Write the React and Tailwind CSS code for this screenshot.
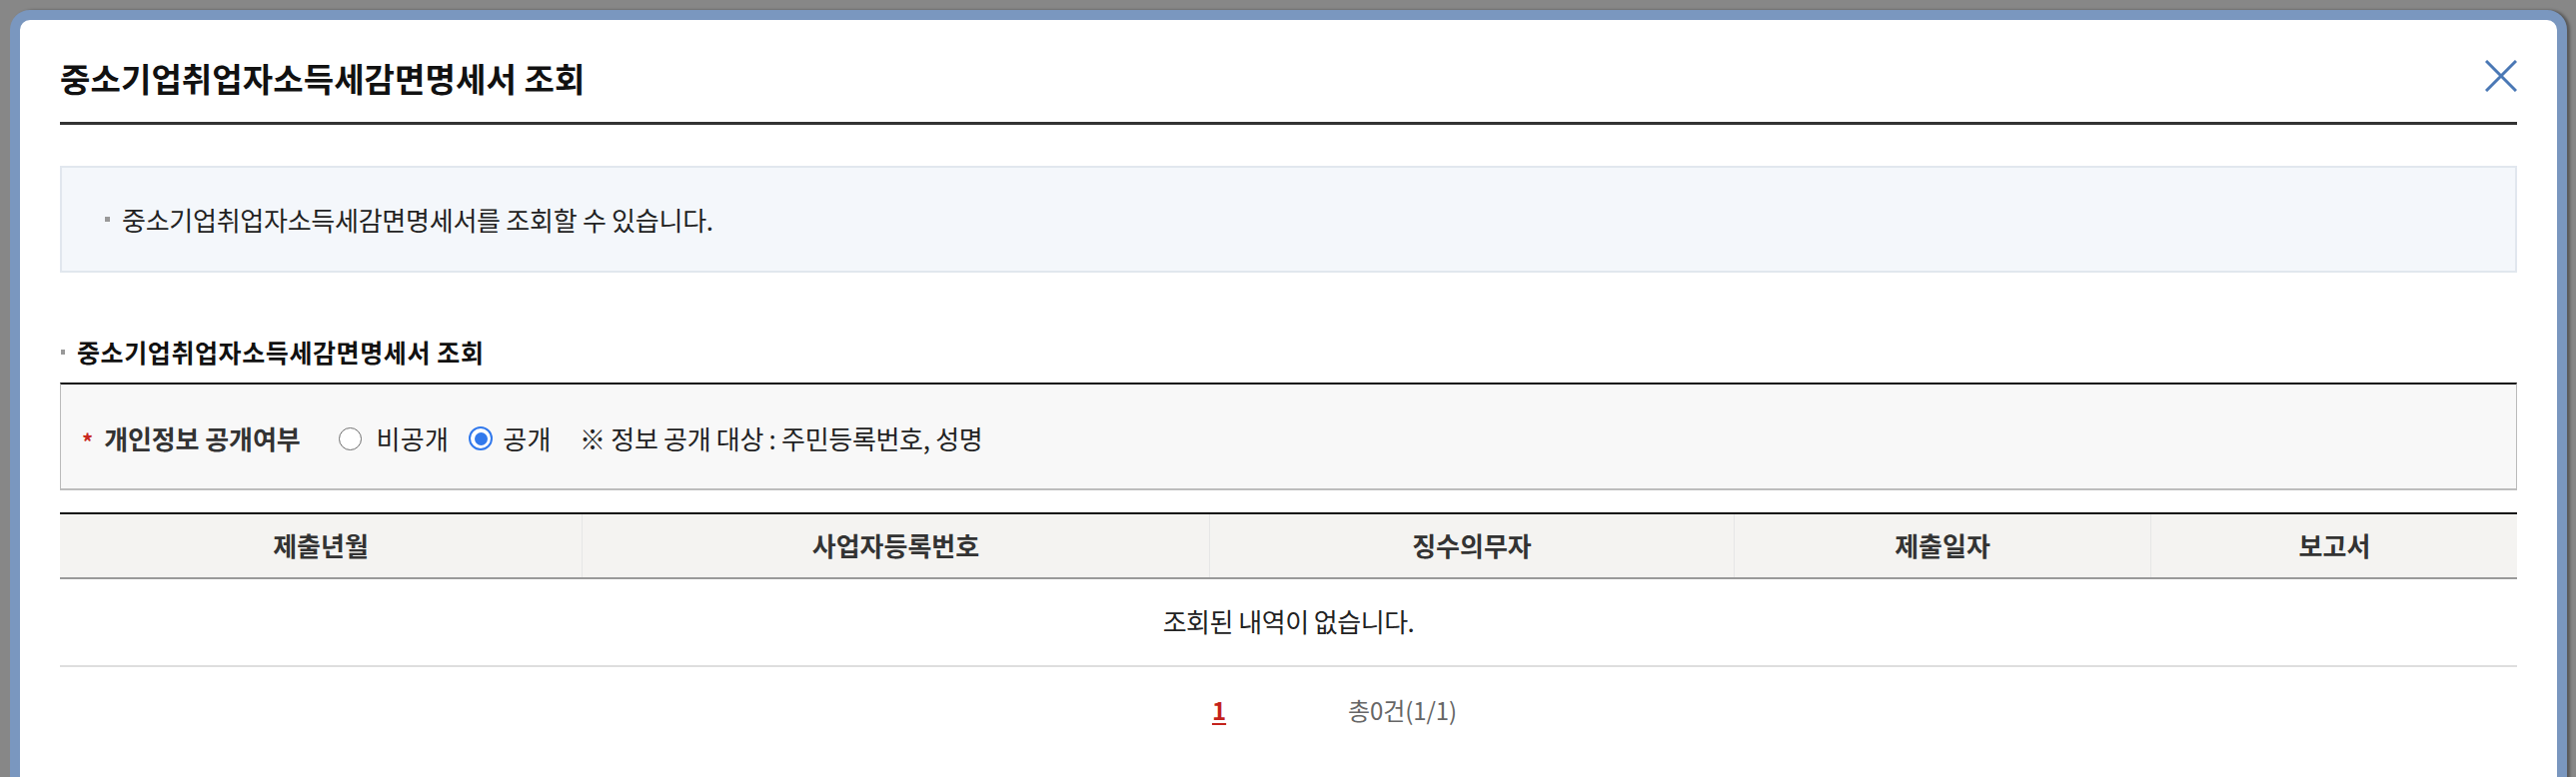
export default function App() {
  const cols = ["제출년월", "사업자등록번호", "징수의무자", "제출일자", "보고서"];
  return (
    <div className="h-[778px] w-full overflow-hidden bg-[#878787] pt-[10px] pl-[10px] font-['Noto_Sans_CJK_KR','Noto_Sans',sans-serif]">
      <div className="w-[2559px] h-[800px] rounded-[20px] border-[10px] border-[#7a97bf] bg-white shadow-[3px_0_3px_rgba(0,0,0,0.35)]">
        <div className="px-[40px]">
          {/* Header */}
          <div className="h-[105px] pt-[37px] flex items-start justify-between border-b-[3px] border-[#333]">
            <h1 className="text-[33px] leading-[42px] font-bold tracking-[0.1px] text-[#111]">
              중소기업취업자소득세감면명세서 조회
            </h1>
            <button className="mt-[3px] w-[32px] h-[32px] text-[#4a78b5]" aria-label="닫기">
              <svg viewBox="0 0 32 32" width="32" height="32" fill="none" stroke="currentColor" strokeWidth="3" strokeLinecap="butt">
                <path d="M1 1 L31 31 M31 1 L1 31" />
              </svg>
            </button>
          </div>

          {/* Info box */}
          <div className="mt-[41px] h-[107px] border-2 border-[#e1e7ee] bg-[#f4f7fb] flex items-center pl-[43px]">
            <span className="w-[5px] h-[5px] bg-[#999] mr-[12px]" />
            <p className="text-[26px] leading-[30px] tracking-[-0.25px] text-[#222]">
              중소기업취업자소득세감면명세서를 조회할 수 있습니다.
            </p>
          </div>

          {/* Section heading */}
          <div className="mt-[61px] h-[36px] flex items-center">
            <span className="ml-[1px] w-[4px] h-[5px] bg-[#999] mr-[12px]" />
            <h2 className="text-[25px] leading-[36px] font-bold tracking-[0.6px] text-[#111]">
              중소기업취업자소득세감면명세서 조회
            </h2>
          </div>

          {/* Form box */}
          <div className="mt-[13px] h-[108px] border-t-2 border-t-[#111] border-x border-x-[#bbb] border-b-2 border-b-[#bdbdbd] bg-[#f8f8f8] flex items-center pl-[21px] pt-[4px] text-[26px] leading-[30px]">
            <span className="text-[#c8281e] font-bold text-[22px] mr-[11px] mt-[4px]">*</span>
            <span className="font-bold text-[#333] tracking-[-0.1px]">개인정보 공개여부</span>
            <label className="ml-[38px] flex items-center">
              <span className="w-[23px] h-[23px] rounded-full border-[1.5px] border-[#6f6f6f] bg-white" />
              <span className="ml-[15px] text-[#222] tracking-[0.3px]">비공개</span>
            </label>
            <label className="ml-[20px] flex items-center">
              <span className="w-[24px] h-[24px] rounded-full border-[2.5px] border-[#3279ec] bg-white flex items-center justify-center">
                <span className="w-[13px] h-[13px] rounded-full bg-[#3279ec]" />
              </span>
              <span className="ml-[10px] text-[#222] tracking-[0.5px]">공개</span>
            </label>
            <span className="ml-[28px] text-[#222] tracking-[-0.3px]">※ 정보 공개 대상 : 주민등록번호, 성명</span>
          </div>

          {/* Table */}
          <div className="mt-[22px] border-t-2 border-[#111]">
            <div className="grid grid-cols-[522px_628px_525px_417px_368px] h-[65px] bg-[#f4f3f1] border-b-2 border-[#999]">
              {cols.map((c, i) => (
                <div
                  key={c}
                  className={
                    i === 0
                      ? "flex items-center justify-center text-[26px] font-bold text-[#333] pb-[2px]"
                      : "flex items-center justify-center text-[26px] font-bold text-[#333] pb-[2px] border-l border-[#e6e6e6]"
                  }
                >
                  {c}
                </div>
              ))}
            </div>
            <div className="h-[88px] flex items-center justify-center pb-[3px] border-b-2 border-[#dedede] text-[26px] text-[#222] tracking-[-0.5px]">
              조회된 내역이 없습니다.
            </div>
          </div>

          {/* Pagination */}
          <div className="h-[88px] flex items-center justify-center pl-[92px] pb-[2px]">
            <a className="text-[24px] font-bold text-[#c4221b] underline underline-offset-[3px]">1</a>
            <span className="ml-[122px] text-[24px] text-[#666] tracking-[-0.1px]">총0건(1/1)</span>
          </div>
        </div>
      </div>
    </div>
  );
}
